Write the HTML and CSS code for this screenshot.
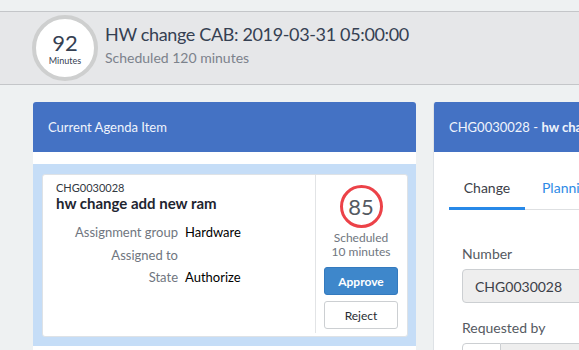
FILE: index.html
```html
<!DOCTYPE html>
<html lang="en">

<head>
    <meta charset="UTF-8" />
    <meta name="viewport" content="width=device-width, initial-scale=1.0" />
    <title>CAB Workbench</title>
    <link rel="stylesheet" href="styles.css">
</head>

<body class="page">
    <header class="meeting-bar">
        <div class="timer-ring">
            <span class="timer-num">92</span>
            <span class="timer-unit">Minutes</span>
        </div>
        <div class="meeting-info">
            <h1 class="meeting-title">HW change CAB: 2019-03-31 05:00:00</h1>
            <p class="meeting-sub">Scheduled 120 minutes</p>
        </div>
    </header>

    <main class="board">
        <section class="panel panel-agenda">
            <div class="panel-head">Current Agenda Item</div>
            <div class="agenda-body">
                <div class="agenda-card">
                    <div class="agenda-main">
                        <div class="item-number">CHG0030028</div>
                        <div class="item-title">hw change add new ram</div>
                        <div class="field-list">
                            <div class="field-row">
                                <span class="field-label">Assignment group</span>
                                <span class="field-value">Hardware</span>
                            </div>
                            <div class="field-row">
                                <span class="field-label">Assigned to</span>
                                <span class="field-value"></span>
                            </div>
                            <div class="field-row">
                                <span class="field-label">State</span>
                                <span class="field-value">Authorize</span>
                            </div>
                        </div>
                    </div>
                    <div class="agenda-side">
                        <div class="count-ring">85</div>
                        <div class="count-text">Scheduled</div>
                        <div class="count-text">10 minutes</div>
                        <button class="btn btn-approve">Approve</button>
                        <button class="btn btn-reject">Reject</button>
                    </div>
                </div>
            </div>
        </section>

        <section class="panel panel-record">
            <div class="panel-head"><span>CHG0030028 - <b>hw change add new ram</b></span></div>
            <div class="record-body">
                <nav class="tabs">
                    <span class="tab tab-active">Change</span>
                    <span class="tab">Planning</span>
                </nav>
                <div class="form">
                    <label class="form-label">Number</label>
                    <div class="form-input readonly">CHG0030028</div>
                    <label class="form-label">Requested by</label>
                    <div class="form-ref">
                        <span class="ref-btn"></span>
                        <span class="ref-input"></span>
                    </div>
                </div>
            </div>
        </section>
    </main>
</body>

</html>
```

FILE: styles.css
```css
.page {
    margin: 0;
    background-color: rgb(238, 241, 242);
    font-family: Lato, "Open Sans", sans-serif;
    overflow: hidden;
    height: 350px;
}

.meeting-bar {
    margin-top: 11px;
    height: 72px;
    display: flex;
    align-items: center;
    padding-left: 32px;
    background-color: rgb(230, 231, 233);
    border-top: 1px solid rgb(196, 198, 201);
    border-bottom: 1px solid rgb(196, 198, 201);
}

.timer-ring {
    width: 58px;
    height: 58px;
    border: 4px solid rgb(206, 207, 207);
    border-radius: 50%;
    background-color: rgb(255, 255, 255);
    display: flex;
    flex-direction: column;
    align-items: center;
    justify-content: center;
    color: rgb(53, 64, 82);
}

.timer-num {
    font-size: 22px;
    line-height: 25px;
}

.timer-unit {
    font-size: 9px;
    line-height: 12px;
}

.meeting-info {
    margin-left: 7px;
    margin-top: -8px;
}

.meeting-title {
    margin: 0;
    font-size: 18px;
    letter-spacing: -0.35px;
    font-weight: 400;
    line-height: 22px;
    color: rgb(53, 64, 82);
}

.meeting-sub {
    margin: 4px 0 0 0;
    font-size: 14px;
    color: rgb(124, 130, 140);
}

.board {
    display: flex;
    gap: 17px;
    padding: 17px 0 0 33px;
}

.panel {
    border-radius: 3px 3px 0 0;
    overflow: hidden;
    flex-shrink: 0;
}

.panel-head {
    height: 50px;
    display: flex;
    align-items: center;
    padding-left: 15px;
    background-color: rgb(68, 114, 196);
    color: rgb(240, 244, 252);
    font-size: 13px;
    white-space: nowrap;
}

.panel-agenda {
    width: 383px;
    background-color: rgb(255, 255, 255);
}

.agenda-body {
    margin-top: 12px;
    padding: 10px 8px 9px 9px;
    background-color: rgb(197, 221, 247);
}

.agenda-card {
    display: flex;
    height: 161px;
    background-color: rgb(255, 255, 255);
    border: 1px solid rgb(222, 226, 230);
    border-radius: 3px;
}

.agenda-main {
    flex: 1;
    padding: 6px 13px;
}

.item-number {
    font-size: 11px;
    color: rgb(51, 57, 66);
}

.item-title {
    margin-top: 0;
    font-size: 15px;
    font-weight: 700;
    color: rgb(30, 37, 48);
}

.field-list {
    margin-top: 9px;
}

.field-row {
    display: flex;
    gap: 7px;
    height: 22.5px;
    align-items: center;
    font-size: 13px;
}

.field-label {
    width: 122px;
    text-align: right;
    color: rgb(112, 118, 128);
}

.field-value {
    color: rgb(0, 0, 0);
}

.agenda-side {
    width: 74px;
    padding: 10px 9px 0 8px;
    margin-bottom: 3px;
    border-left: 1px solid rgb(226, 228, 230);
    display: flex;
    flex-direction: column;
    align-items: center;
}

.count-ring {
    width: 37px;
    height: 37px;
    border: 3px solid rgb(236, 66, 72);
    border-radius: 50%;
    display: flex;
    align-items: center;
    justify-content: center;
    font-size: 22px;
    color: rgb(85, 90, 98);
    margin-bottom: 3px;
}

.count-text {
    font-size: 12px;
    line-height: 14px;
    text-align: center;
    color: rgb(112, 118, 128);
}

.btn {
    width: 74px;
    height: 28px;
    border-radius: 3px;
    font-family: inherit;
    font-size: 12px;
    padding: 0;
}

.btn-approve {
    margin-top: 8px;
    border: 1px solid rgb(52, 122, 190);
    background-color: rgb(62, 135, 203);
    color: rgb(255, 255, 255);
    font-weight: 700;
}

.btn-reject {
    margin-top: 6px;
    border: 1px solid rgb(204, 207, 210);
    background-color: rgb(255, 255, 255);
    color: rgb(40, 44, 50);
}

.panel-record {
    width: 300px;
    background-color: rgb(255, 255, 255);
    border-left: 1px solid rgb(222, 226, 230);
}

.record-body {
    padding: 0 0 0 15px;
    height: 200px;
}

.tabs {
    display: flex;
    padding-top: 21px;
    border-bottom: 1px solid rgb(222, 224, 226);
}

.tab {
    padding: 6px 0 11px 0;
    width: 76px;
    font-size: 14px;
    color: rgb(45, 138, 230);
    margin-right: 17px;
    text-align: left;
}

.tab-active {
    text-align: center;
    color: rgb(60, 64, 72);
    border-bottom: 3px solid rgb(40, 137, 232);
    margin-bottom: -1px;
}

.form {
    padding: 35px 0 0 13px;
}

.form-label {
    display: block;
    font-size: 14px;
    color: rgb(85, 90, 98);
    margin-bottom: 7px;
}

.form-input {
    box-sizing: border-box;
    height: 34px;
    border: 1px solid rgb(204, 207, 210);
    border-radius: 4px;
    background-color: rgb(238, 238, 238);
    display: flex;
    align-items: center;
    padding-left: 12px;
    font-size: 14px;
    color: rgb(60, 64, 72);
    margin-bottom: 16px;
}

.form-ref {
    display: flex;
    height: 34px;
}

.ref-btn {
    width: 37px;
    border: 1px solid rgb(204, 207, 210);
    border-radius: 4px 0 0 4px;
    background-color: rgb(255, 255, 255);
}

.ref-input {
    flex: 1;
    border: 1px solid rgb(204, 207, 210);
    border-left: 0;
    background-color: rgb(238, 238, 238);
}
```
